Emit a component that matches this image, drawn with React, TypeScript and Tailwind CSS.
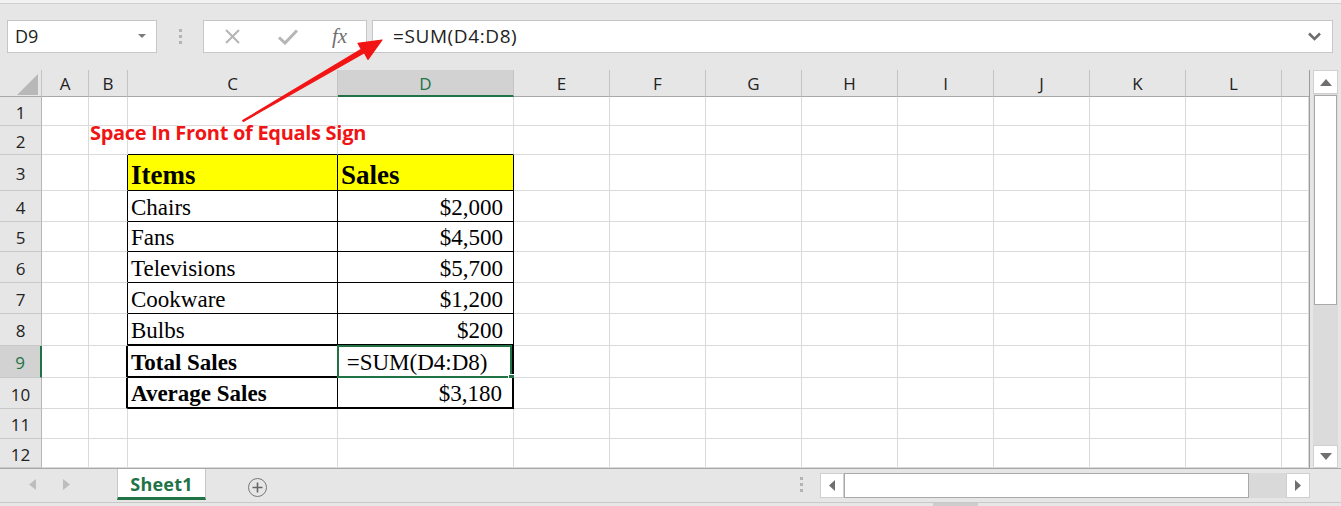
import React from "react";

const COLS = [
  { l: "A", w: "w-[47px]" },
  { l: "B", w: "w-[39px]" },
  { l: "C", w: "w-[210px]" },
  { l: "D", w: "w-[176px]" },
  { l: "E", w: "w-[96px]" },
  { l: "F", w: "w-[96px]" },
  { l: "G", w: "w-[96px]" },
  { l: "H", w: "w-[96px]" },
  { l: "I", w: "w-[96px]" },
  { l: "J", w: "w-[96px]" },
  { l: "K", w: "w-[96px]" },
  { l: "L", w: "w-[96px]" },
  { l: "", w: "w-[27px]" },
];

const ROW_H = [
  "h-[29px]", "h-[29px]", "h-[36px]", "h-[31px]", "h-[30px]", "h-[31px]",
  "h-[31px]", "h-[32px]", "h-[32px]", "h-[31px]", "h-[30px]", "h-[29px]",
];

// C / D contents per row
const DATA: Record<number, { c: string; d: string; bold?: boolean; head?: boolean; left?: boolean }> = {
  3: { c: "Items", d: "Sales", bold: true, head: true, left: true },
  4: { c: "Chairs", d: "$2,000" },
  5: { c: "Fans", d: "$4,500" },
  6: { c: "Televisions", d: "$5,700" },
  7: { c: "Cookware", d: "$1,200" },
  8: { c: "Bulbs", d: "$200" },
  9: { c: "Total Sales", d: "\u00a0=SUM(D4:D8)", bold: true, left: true },
  10: { c: "Average Sales", d: "$3,180", bold: true },
};

function cellBorder(r: number, c: number) {
  const inTable = r >= 3 && r <= 10;
  let right = "border-r border-r-[#dadada]";
  let bottom = "border-b border-b-[#dadada]";
  if (inTable && c === 1) right = r >= 9 ? "border-r-2 border-r-black" : "border-r border-r-black";
  if (inTable && c === 2) right = "border-r border-r-black";
  if (inTable && c === 3) right = r >= 9 ? "border-r-2 border-r-black" : "border-r border-r-black";
  if ((c === 2 || c === 3) && r >= 2 && r <= 10)
    bottom = r >= 8 ? "border-b-2 border-b-black" : "border-b border-b-black";
  return `${right} ${bottom}`;
}

const Cell = ({ r, c }: { r: number; c: number }) => {
  const row = DATA[r];
  const yellow = r === 3 && (c === 2 || c === 3);
  let content: React.ReactNode = null;
  if (row && c === 2) content = row.c;
  if (row && c === 3) content = row.d;
  const size = row?.head ? "text-[27px]" : "text-[23px]";
  const weight = row?.bold && (c === 2 || r === 3) ? "font-bold" : "font-normal";
  const align = c === 3 && !row?.left ? "justify-end pr-[10px]" : "justify-start pl-[3px]";

  return (
    <div
      className={`relative shrink-0 ${COLS[c].w} h-full ${cellBorder(r, c)} ${yellow ? "bg-[#ffff00]" : "bg-white"} flex items-end ${align}`}
    >
      {content && (
        <span className={`font-['Liberation_Serif',serif] leading-none whitespace-pre text-black ${size} ${weight} ${row?.head ? "mb-[1px]" : "mb-[2px]"}`}>
          {content}
        </span>
      )}
      {r === 9 && c === 3 && (
        <>
          <div className="absolute -left-[1px] -top-[1px] right-0 -bottom-[2px] border-2 border-[#217346]" />
          <div className="absolute -right-[4px] -bottom-[6px] w-[8px] h-[8px] bg-[#217346] border border-white" />
        </>
      )}
    </div>
  );
};

const FormulaBar = () => (
  <div className="flex items-center h-[33px] mt-[16px]">
    <div className="ml-[7px] w-[150px] h-[33px] bg-white border border-[#c6c6c6] flex items-center justify-between pl-[7px] pr-[10px]">
      <span className="text-[18px] text-[#222]">D9</span>
      <svg width="8" height="5" viewBox="0 0 8 5"><path d="M0 0h8L4 4z" fill="#7a7a7a" /></svg>
    </div>
    <div className="w-[46px] flex flex-col items-center gap-[3px]">
      <div className="w-[3px] h-[3px] bg-[#b3b3b3]" />
      <div className="w-[3px] h-[3px] bg-[#b3b3b3]" />
      <div className="w-[3px] h-[3px] bg-[#b3b3b3]" />
    </div>
    <div className="w-[164px] h-[33px] bg-white border border-[#c6c6c6] flex items-center">
      <svg className="ml-[20px]" width="17" height="17" viewBox="0 0 17 17">
        <path d="M2 2L15 15M15 2L2 15" stroke="#b5b5b5" strokeWidth="2" />
      </svg>
      <svg className="ml-[37px]" width="20" height="16" viewBox="0 0 20 16">
        <path d="M1 8.5L7 14L19 1.5" stroke="#b5b5b5" strokeWidth="3" fill="none" />
      </svg>
      <span className="ml-[34px] font-['Liberation_Serif',serif] italic text-[21px] text-[#6f6f6f] leading-none">fx</span>
    </div>
    <div className="ml-[5px] w-[961px] h-[33px] bg-white border border-[#c6c6c6] flex items-center justify-between pl-[20px] pr-[11px]">
      <span className="text-[19px] text-[#222] tracking-[0.6px]">=SUM(D4:D8)</span>
      <svg width="13" height="9" viewBox="0 0 13 9"><path d="M1 1.5l5.5 5.5 5.5-5.5" stroke="#6d6d6d" strokeWidth="2.6" fill="none" /></svg>
    </div>
  </div>
);

const Grid = () => (
  <div className="flex mt-[17px]">
    <div className="flex flex-col border-r border-[#9c9c9c]">
      {/* column headers */}
      <div className="flex h-[27px]">
        <div className="w-[42px] shrink-0 border-b border-[#a8a8a8] border-r border-r-[#c4c4c4] relative">
          <svg className="absolute left-[17px] top-[4px]" width="21" height="21" viewBox="0 0 21 21">
            <path d="M21 0V21H0z" fill="#b8b8b8" />
          </svg>
        </div>
        {COLS.map((col) =>
          col.l === "D" ? (
            <div key={col.l} className={`${col.w} shrink-0 flex items-center justify-center bg-[#d2d2d2] border-b-2 border-[#217346] border-r border-r-[#c4c4c4] text-[17px] text-[#217346] pt-[2px]`}>
              {col.l}
            </div>
          ) : (
            <div key={col.l || "m"} className={`${col.w} shrink-0 flex items-center justify-center border-b border-[#a8a8a8] ${col.l ? "border-r border-r-[#c4c4c4]" : ""} text-[17px] text-[#222] pt-[2px]`}>
              {col.l}
            </div>
          )
        )}
      </div>
      {ROW_H.map((h, i) => {
        const r = i + 1;
        const active = r === 9;
        return (
          <div key={r} className={`flex ${h}`}>
            <div
              className={`w-[42px] shrink-0 flex items-center justify-center text-[17px] pt-[3px] border-b border-[#c8c8c8] ${
                active ? "bg-[#d2d2d2] text-[#217346] border-r-2 border-r-[#217346]" : "text-[#222] border-r border-r-[#b5b5b5]"
              }`}
            >
              {r}
            </div>
            {COLS.map((_, c) => (
              <Cell key={c} r={r} c={c} />
            ))}
          </div>
        );
      })}
    </div>
    {/* vertical scrollbar */}
    <div className="w-[31px] flex flex-col items-center pl-[2px] pr-[2px]">
      <div className="w-[25px] h-[24px] bg-white border border-[#d0d0d0] flex items-center justify-center">
        <svg width="12" height="7" viewBox="0 0 12 7"><path d="M0 7L6 0l6 7z" fill="#6f6f6f" /></svg>
      </div>
      <div className="w-[25px] flex-1 bg-[#dbdbdb] flex flex-col">
        <div className="h-[210px] bg-white border border-[#a9a9a9] mx-[1px] mt-[1px]" />
      </div>
      <div className="w-[25px] h-[23px] bg-white border border-[#d0d0d0] flex items-center justify-center">
        <svg width="12" height="7" viewBox="0 0 12 7"><path d="M0 0h12L6 7z" fill="#6f6f6f" /></svg>
      </div>
    </div>
  </div>
);

const BottomBar = () => (
  <div className="flex flex-col border-t border-[#a8a8a8]">
    <div className="flex h-[33px] items-start">
      <div className="w-[117px] h-[31px] flex items-center pl-[29px] gap-[25px]">
        <svg width="8" height="11" viewBox="0 0 8 11"><path d="M7 0v11L0 5.5z" fill="#bdbdbd" /></svg>
        <svg width="8" height="11" viewBox="0 0 8 11"><path d="M1 0v11L8 5.5z" fill="#bdbdbd" /></svg>
      </div>
      <div className="w-[89px] h-[31px] bg-white border-x border-[#c6c6c6] border-b-[3px] border-b-[#217346] flex items-center justify-center pt-[3px]">
        <span className="text-[18px] font-bold text-[#217346] tracking-[0.2px]">Sheet1</span>
      </div>
      <div className="ml-[42px] mt-[9px] w-[19px] h-[19px] rounded-full border-[1.5px] border-[#777] flex items-center justify-center">
        <svg width="11" height="11" viewBox="0 0 11 11"><path d="M5.5 0.5v10M0.5 5.5h10" stroke="#666" strokeWidth="1.6" /></svg>
      </div>
      <div className="ml-[533px] mt-[8px] flex flex-col gap-[3px]">
        <div className="w-[3px] h-[3px] bg-[#b3b3b3]" />
        <div className="w-[3px] h-[3px] bg-[#b3b3b3]" />
        <div className="w-[3px] h-[3px] bg-[#b3b3b3]" />
      </div>
      <div className="ml-[17px] mt-[4px] flex h-[25px]">
        <div className="w-[24px] h-[25px] bg-white border border-[#cfcfcf] flex items-center justify-center">
          <svg width="6" height="11" viewBox="0 0 6 11"><path d="M6 0v11L0 5.5z" fill="#6f6f6f" /></svg>
        </div>
        <div className="w-[405px] h-[25px] bg-white border border-[#a9a9a9]" />
        <div className="w-[37px] h-[25px] bg-[#d9d9d9]" />
        <div className="w-[24px] h-[25px] bg-white border border-[#cfcfcf] flex items-center justify-center">
          <svg width="6" height="11" viewBox="0 0 6 11"><path d="M0 0v11L6 5.5z" fill="#6f6f6f" /></svg>
        </div>
      </div>
    </div>
    <div className="h-[4px] border-t border-[#c9c9c9] relative">
      <div className="absolute left-[933px] top-0 w-[45px] h-[3px] bg-[#cdcdcd]" />
    </div>
  </div>
);

export default function App() {
  return (
    <div className="w-[1341px] h-[506px] bg-[#e6e6e6] relative overflow-hidden font-['Open_Sans',sans-serif]">
      <div className="h-[4px] bg-[#f2f2f2] border-b border-[#cfcfcf]" />
      <FormulaBar />
      <Grid />
      <BottomBar />

      {/* annotation */}
      <svg className="absolute left-0 top-0 pointer-events-none" width="1341" height="506">
        <polygon
          points="243.3,121.4 364.3,52.8 368,59.4 382,40 358,43.3 361.3,49.2 242.7,120.6"
          fill="#f21414"
          stroke="#f21414"
          strokeWidth="1.2"
          strokeLinejoin="round"
        />
      </svg>
      <div className="absolute left-[90px] top-[121px] text-[20px] font-bold text-[#f01414] leading-[24px] tracking-[-0.3px] [text-shadow:0_0_2px_#fff,0_0_2px_#fff] whitespace-nowrap pointer-events-none">
        Space In Front of Equals Sign
      </div>
    </div>
  );
}
